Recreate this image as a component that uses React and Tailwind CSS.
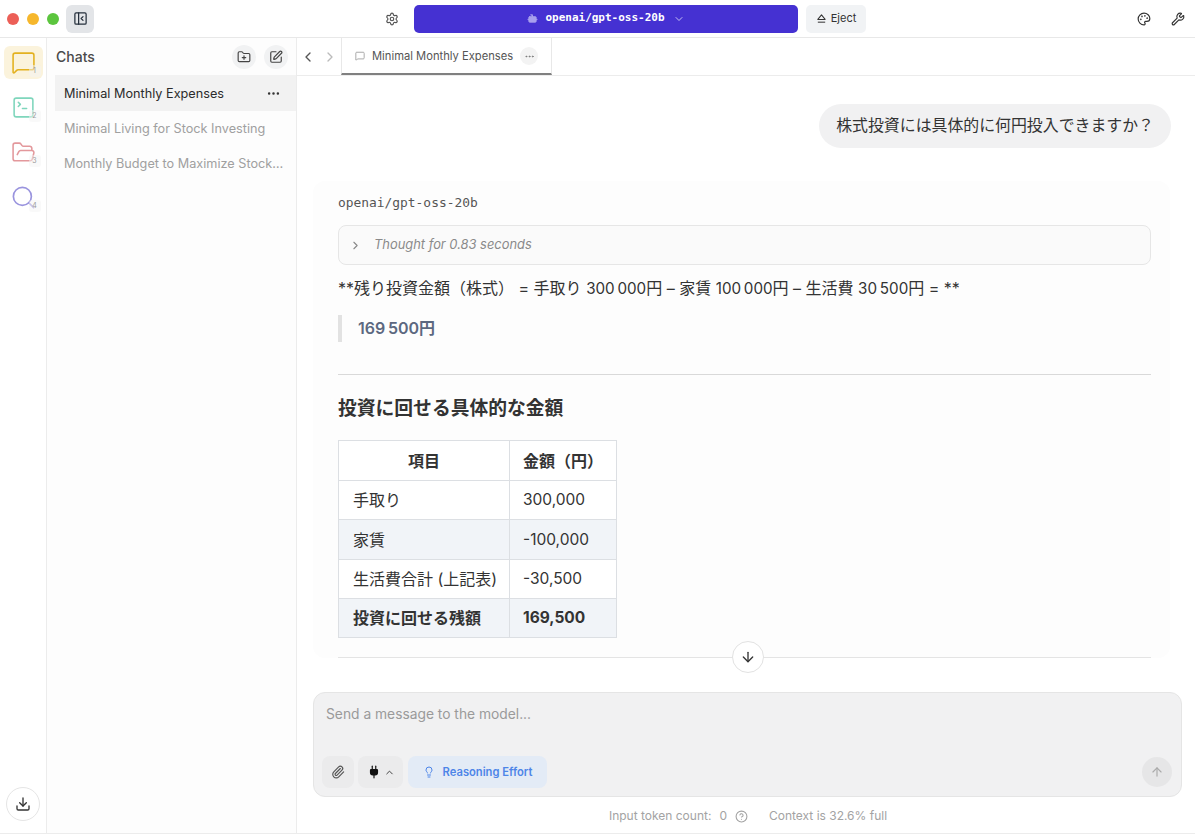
import React from "react";
import {
  ArrowDown,
  ArrowUp,
  Bot,
  ChevronDown,
  ChevronLeft,
  ChevronRight,
  ChevronUp,
  CircleHelp,
  Download,
  Ellipsis,
  FolderOpen,
  FolderPlus,
  Lightbulb,
  MessageSquare,
  Palette,
  PanelLeftClose,
  Paperclip,
  Plug,
  Search,
  Settings,
  SquarePen,
  SquareTerminal,
  Wrench,
} from "lucide-react";

const font = { fontFamily: '"Inter", "Noto Sans CJK JP", sans-serif' };

const navItems = [
  { Icon: MessageSquare, n: 1, size: 25, color: "text-[#e3b11f]", box: "bg-[#fbf3dc]" },
  { Icon: SquareTerminal, n: 2, size: 25, color: "text-[#7fd6bc]", box: "" },
  { Icon: FolderOpen, n: 3, size: 25, color: "text-[#e3989c]", box: "" },
  { Icon: Search, n: 4, size: 27, color: "text-[#9a94de]", box: "" },
];

const chats = ["Minimal Living for Stock Investing", "Monthly Budget to Maximize Stock Investing"];

const rows = [
  { name: "手取り", value: "300,000", h: "h-[39px]" },
  { name: "家賃", value: "-100,000", shade: true, h: "h-[40px]" },
  { name: "生活費合計 (上記表)", value: "-30,500", h: "h-[39px]" },
  { name: "投資に回せる残額", value: "169,500", shade: true, bold: true, h: "h-[39px]" },
];

function EjectIcon() {
  return (
    <svg width="11" height="11" viewBox="0 0 24 24" fill="none" stroke="currentColor" strokeWidth="2.2" strokeLinejoin="round">
      <path d="M12 4 L20 14 H4 Z" />
      <path d="M4 20 H20" />
    </svg>
  );
}

function Num({ children }) {
  return <span className="text-[15.2px]">{children}</span>;
}

function TitleBar() {
  return (
    <div className="flex h-[38px] shrink-0 items-center border-b border-[#e8e8e8] bg-white">
      <div className="flex w-[385px] shrink-0 items-center pl-[7px]">
        <span className="h-3 w-3 rounded-full bg-[#ec5f57]" />
        <span className="ml-2 h-3 w-3 rounded-full bg-[#f6b72c]" />
        <span className="ml-2 h-3 w-3 rounded-full bg-[#5cc53e]" />
        <span className="ml-[7px] flex h-[28px] w-[28px] items-center justify-center rounded-md bg-[#e3e5e8]">
          <PanelLeftClose size={15} className="text-[#26303d]" />
        </span>
      </div>
      <Settings size={14} className="text-[#555]" />
      <div className="ml-[15px] flex h-[28px] w-[384px] items-center justify-center rounded-[5px] bg-[#4531d2] text-white">
        <Bot size={11} className="fill-[#a9a0ee] text-[#a9a0ee]" />
        <span className="ml-[7px] font-['DejaVu_Sans_Mono'] text-[11px] font-bold">openai/gpt-oss-20b</span>
        <ChevronDown size={12} className="ml-[8px] text-[#c6c0f2]" />
      </div>
      <div className="ml-2 flex h-[28px] w-[60px] items-center justify-center gap-[4px] rounded-[5px] bg-[#f1f3f5] text-[11px] text-[#333]">
        <EjectIcon />
        <span>Eject</span>
      </div>
      <div className="ml-auto flex items-center gap-[20px] pr-[10px] text-[#333]">
        <Palette size={14} />
        <Wrench size={14} />
      </div>
    </div>
  );
}

function NavRail() {
  return (
    <div className="flex w-[47px] shrink-0 flex-col items-center border-r border-[#ececec] bg-white pt-2">
      <div className="flex flex-col gap-[12px]">
        {navItems.map(({ Icon, n, size, color, box }) => (
          <div key={n} className={`relative flex h-[33px] w-[39px] items-center justify-center rounded-md ${box}`}>
            <Icon size={size} strokeWidth={1.5} className={color} />
            <span className="absolute bottom-[2px] right-[2px] flex h-[12px] w-[12px] items-center justify-center rounded-[3px] bg-[#f3f3f3]/50 text-[7px] text-[#999]">
              {n}
            </span>
          </div>
        ))}
      </div>
      <div className="mt-auto mb-[12px] flex h-[34px] w-[34px] items-center justify-center rounded-full border border-[#e5e5e5]">
        <Download size={16} className="text-[#333]" />
      </div>
    </div>
  );
}

function ChatList() {
  return (
    <div className="flex w-[250px] shrink-0 flex-col border-r border-[#ececec] bg-[#fdfdfd]">
      <div className="flex h-[37px] shrink-0 items-center pl-[9px] pr-[8px]">
        <span className="text-[14px] font-medium text-[#4a4a4a]">Chats</span>
        <span className="ml-auto flex h-6 w-6 items-center justify-center rounded-full bg-[#f1f2f3]">
          <FolderPlus size={14} className="text-[#444]" />
        </span>
        <span className="ml-2 flex h-6 w-6 items-center justify-center rounded-full bg-[#f1f2f3]">
          <SquarePen size={14} className="text-[#444]" />
        </span>
      </div>
      <div className="ml-2 flex h-[36px] items-center bg-[#f2f2f2] pl-[9px] pr-[15px] pt-[1px] text-[12.7px] text-[#2b2b2b]">
        <span>Minimal Monthly Expenses</span>
        <Ellipsis size={15} className="ml-auto text-[#333]" />
      </div>
      {chats.map((c) => (
        <div key={c} className="ml-2 flex h-[35px] items-center pl-[9px] pr-[12px] text-[12.7px] text-[#a0a0a0]">
          <span className="truncate">{c}</span>
        </div>
      ))}
    </div>
  );
}

function TabBar() {
  return (
    <div className="flex h-[38px] shrink-0 items-stretch border-b border-[#ececec] bg-white">
      <div className="flex w-[44px] items-center justify-center gap-[6px]">
        <ChevronLeft size={16} className="text-[#555]" />
        <ChevronRight size={16} className="text-[#bbb]" />
      </div>
      <div className="flex w-[211px] items-center border-x border-b-2 border-[#e8e8e8] border-b-[#808080] pl-[13px] pt-[1px] text-[11.2px] text-[#555]">
        <MessageSquare size={10} className="text-[#999]" />
        <span className="ml-[7px]">Minimal Monthly Expenses</span>
        <span className="ml-[7px] flex h-[18px] w-[18px] items-center justify-center rounded-full bg-[#f3f3f3]">
          <Ellipsis size={11} className="text-[#777]" />
        </span>
      </div>
    </div>
  );
}

function Answer() {
  return (
    <div className="ml-[16px] mr-[25px] mt-[33px] rounded-xl bg-[#fdfdfd] pl-[25px] pr-[19px] pt-[13px]">
      <div className="font-['DejaVu_Sans_Mono'] text-[12.9px] leading-[18px] text-[#555]">openai/gpt-oss-20b</div>
      <div className="mt-[13px] flex h-[40px] items-center rounded-lg border border-[#e6e6e6] bg-[#fafafa] pl-[10px] text-[12.9px] italic text-[#8a8a8a]">
        <ChevronRight size={13} className="text-[#888]" />
        <span className="ml-[12px]">Thought for 0.83 seconds</span>
      </div>
      <p className="mt-[11px] text-[16px] leading-[24px] text-[#333]">
        **残り投資金額（株式） = 手取り <Num>300{"\u2009"}000</Num>円 – 家賃 <Num>100{"\u2009"}000</Num>円 – 生活費{" "}
        <Num>30{"\u2009"}500</Num>円 = **
      </p>
      <div className="mt-[14px] flex h-[27px] items-center border-l-4 border-[#e2e2e2] pl-[16px] pb-[1px] text-[16px] font-semibold text-[#5c6880]">
        169{"\u2009"}500円
      </div>
      <div className="mt-[32px] border-t border-[#d9d9d9]" />
      <h3 className="mt-[21px] text-[18.8px] font-bold leading-[26px] text-[#333]">投資に回せる具体的な金額</h3>
      <table className="mt-[18px] border-collapse text-[16px] text-[#333]">
        <thead>
          <tr className="h-[40px] bg-white font-bold">
            <th className="w-[171px] border border-[#dcdfe3] text-center font-bold">項目</th>
            <th className="w-[107px] border border-[#dcdfe3] pl-[13px] text-left font-bold">金額（円）</th>
          </tr>
        </thead>
        <tbody>
          {rows.map((r) => (
            <tr key={r.name} className={`${r.h} ${r.shade ? "bg-[#f1f4f8]" : "bg-white"} ${r.bold ? "font-bold" : ""}`}>
              <td className="border border-[#dcdfe3] pl-[14px]">{r.name}</td>
              <td className="border border-[#dcdfe3] pl-[13px] text-[15.5px]">{r.value}</td>
            </tr>
          ))}
        </tbody>
      </table>
      <div className="relative mt-[19px] border-t border-[#e4e4e4]">
        <span className="absolute -top-[17px] left-[394px] flex h-[32px] w-[32px] items-center justify-center rounded-full border border-[#e2e2e2] bg-white">
          <ArrowDown size={16} className="text-[#333]" />
        </span>
      </div>
    </div>
  );
}

function Composer() {
  return (
    <div className="ml-[16px] mr-[13px] mt-[34px] flex h-[105px] flex-col rounded-xl border border-[#e5e5e5] bg-[#f1f1f2] px-[8px] pb-[8px] pt-[11px]">
      <div className="pl-[4px] text-[13.8px] text-[#9a9a9a]">Send a message to the model...</div>
      <div className="mt-auto flex items-center">
        <span className="flex h-[32px] w-[32px] items-center justify-center rounded-lg bg-[#ebebec]">
          <Paperclip size={14} className="text-[#555]" />
        </span>
        <span className="ml-[4px] flex h-[32px] w-[45px] items-center justify-center gap-[3px] rounded-lg bg-[#ebebec]">
          <Plug size={14} className="fill-[#111] text-[#111]" />
          <ChevronUp size={11} className="text-[#333]" />
        </span>
        <span className="ml-[5px] flex h-[32px] w-[139px] items-center justify-center gap-[8px] rounded-lg bg-[#e3ebf6] text-[11.2px] font-semibold text-[#4d85e8]">
          <Lightbulb size={12} />
          Reasoning Effort
        </span>
        <span className="ml-auto mr-[1px] flex h-[30px] w-[30px] items-center justify-center rounded-full bg-[#e6e6e7]">
          <ArrowUp size={14} className="text-[#aaa]" />
        </span>
      </div>
    </div>
  );
}

export default function App() {
  return (
    <div className="flex h-[837px] w-[1195px] flex-col overflow-hidden bg-white" style={font}>
      <TitleBar />
      <div className="flex min-h-0 flex-1 border-b border-[#ececec] mb-[3px]">
        <NavRail />
        <ChatList />
        <div className="flex min-w-0 flex-1 flex-col">
          <TabBar />
          <div className="mr-[24px] mt-[28px] self-end rounded-[22px] bg-[#f1f1f2] px-[17px] py-[10px] text-[15.9px] leading-[24px] text-[#333]">
            株式投資には具体的に何円投入できますか？
          </div>
          <Answer />
          <Composer />
          <div className="mt-[10px] flex items-center justify-center pl-[4px] text-[12px] text-[#a3a3a3]">
            <span>Input token count:</span>
            <span className="ml-[8px]">0</span>
            <CircleHelp size={13} className="ml-[8px]" />
            <span className="ml-[21px]">Context is 32.6% full</span>
          </div>
        </div>
      </div>
    </div>
  );
}
